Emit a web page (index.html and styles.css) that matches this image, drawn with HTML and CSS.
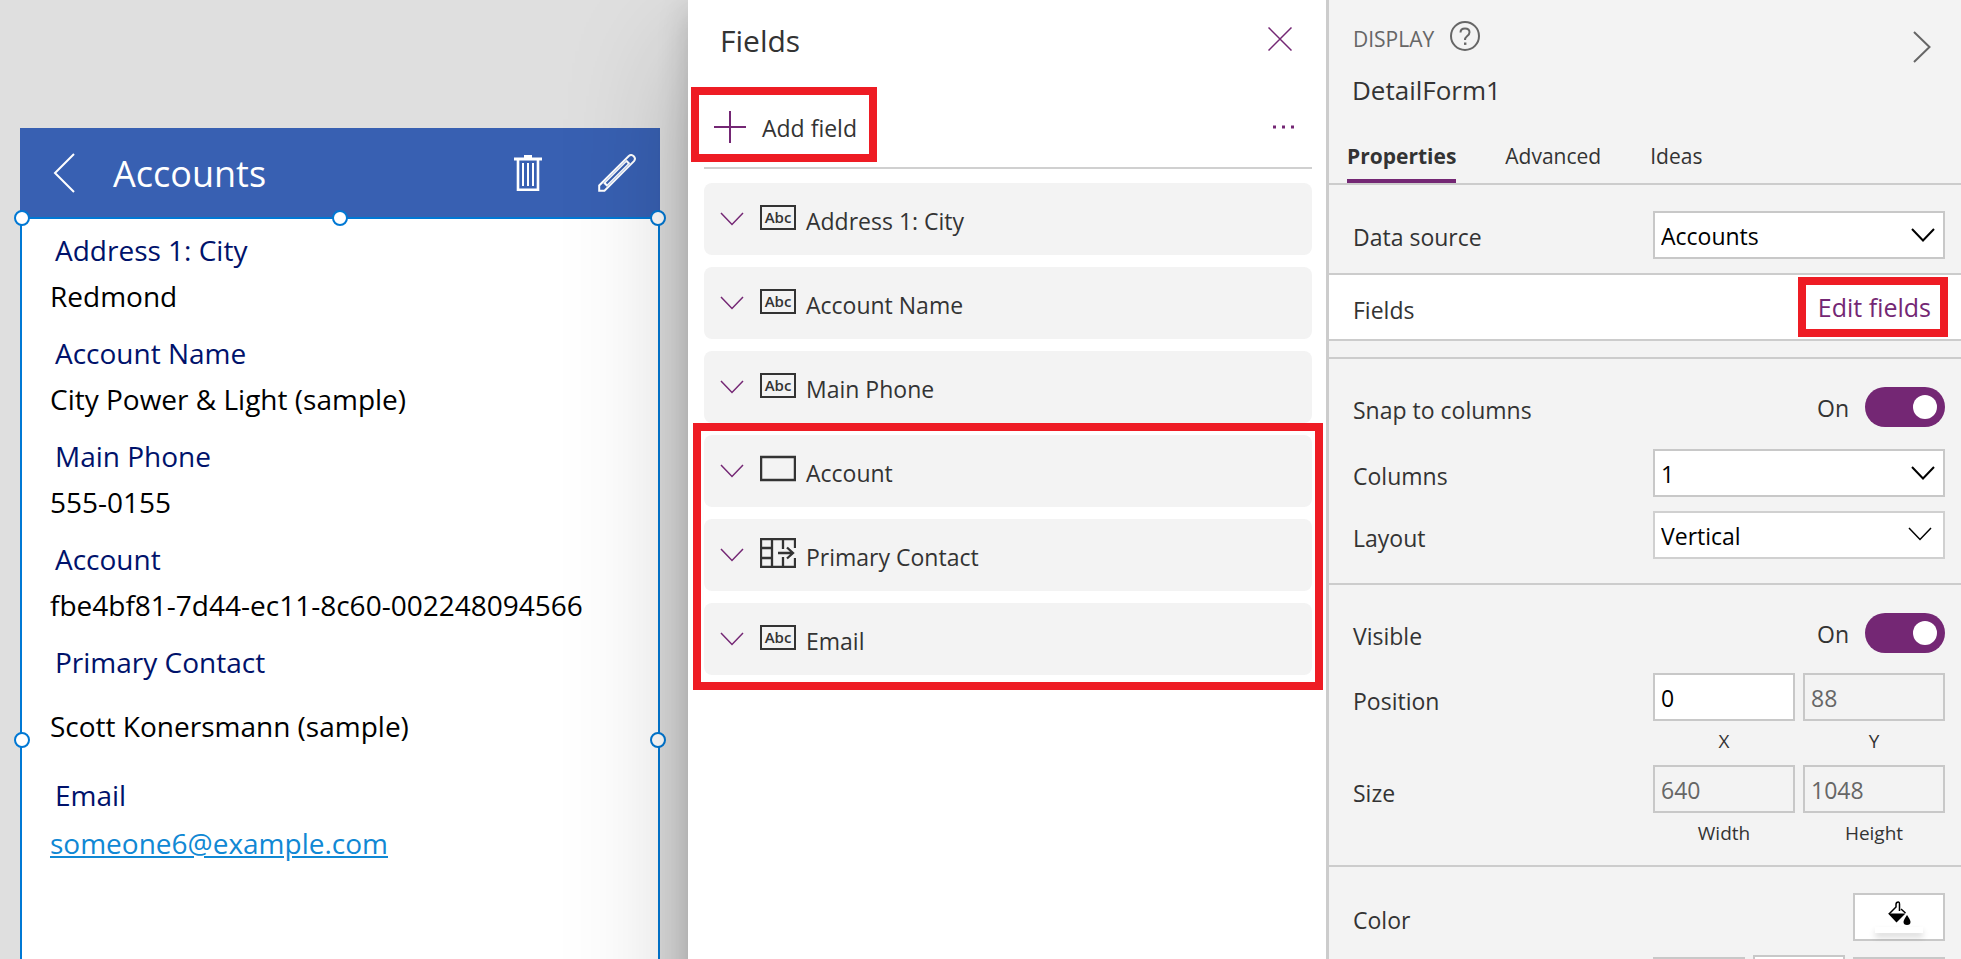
FILE: index.html
```html
<!DOCTYPE html>
<html lang="en">
<head>
<meta charset="utf-8">
<title>DetailForm1 - Fields</title>
<link rel="stylesheet" href="styles.css">
</head>
<body>
<svg class="defs" aria-hidden="true">
  <symbol id="chevron" viewBox="0 0 24 14"><path d="M1 1 L12 12.500 L23 1" fill="none" stroke="currentColor"/></symbol>
  <symbol id="blank" viewBox="0 0 36 30"><rect x="1" y="3" width="34" height="23" fill="none" stroke="currentColor" stroke-width="2.500"/></symbol>
  <symbol id="lookup" viewBox="0 0 36 30"><path d="M35 10 V1 H1 V29 H35 V20 M12 1 V29 M1 10 H12 M1 20 H12 M23 1 V11 M23 19 V29 M18 15 H33 M27 9.500 L33 15 L27 20.500" fill="none" stroke="currentColor" stroke-width="2.300"/></symbol>
</svg>
<div class="app">
  <main class="canvas">
    <div class="phone">
      <header class="phone-header">
        <button class="icon-btn" aria-label="Back"><svg width="24" height="40" viewBox="0 0 24 40"><path d="M22 1 L3 20 L22 39" fill="none" stroke="#fff" stroke-width="2"/></svg></button>
        <h1 class="phone-title">Accounts</h1>
        <button class="icon-btn trash" aria-label="Delete"><svg width="28" height="36" viewBox="0 0 28 36"><path d="M0 4 H28 M10 1.500 H18" stroke="#fff" stroke-width="3"/><path d="M4 4 V34.700 H24 V4" fill="none" stroke="#fff" stroke-width="2.600"/><path d="M9 8 V31 M14 8 V31 M19 8 V31" stroke="#fff" stroke-width="2"/></svg></button>
        <button class="icon-btn" aria-label="Edit"><svg width="38" height="38" viewBox="0 0 38 38"><path d="M1.200 36.800 V31.500 L30.800 2 A3.700 3.700 0 0 1 36 7.200 L6.500 36.800 Z" fill="none" stroke="#fff" stroke-width="2"/><path d="M7 31 L30.500 7.500" stroke="#fff" stroke-width="5"/><path d="M8.500 29.500 L29 9" stroke="#3860b2" stroke-width="2"/></svg></button>
      </header>
      <section class="form">
        <div class="card"><div class="card-label">Address 1: City</div><div class="card-value">Redmond</div></div>
        <div class="card"><div class="card-label">Account Name</div><div class="card-value">City Power &amp; Light (sample)</div></div>
        <div class="card"><div class="card-label">Main Phone</div><div class="card-value">555-0155</div></div>
        <div class="card"><div class="card-label">Account</div><div class="card-value">fbe4bf81-7d44-ec11-8c60-002248094566</div></div>
        <div class="card card-tall"><div class="card-label">Primary Contact</div><div class="card-value">Scott Konersmann (sample)</div></div>
        <div class="card card-link"><div class="card-label">Email</div><div class="card-value"><a href="#">someone6@example.com</a></div></div>
        <span class="handle top left"></span><span class="handle top center"></span><span class="handle top right"></span>
        <span class="handle middle left"></span><span class="handle middle right"></span>
      </section>
    </div>
  </main>

  <section class="fields">
    <header class="fields-header">
      <h2 class="fields-title">Fields</h2>
      <button class="icon-btn purple" aria-label="Close"><svg width="24" height="24" viewBox="0 0 24 24"><path d="M0.500 0.500 L23.500 23.500 M23.500 0.500 L0.500 23.500" stroke="currentColor" stroke-width="1.500"/></svg></button>
    </header>
    <div class="fields-toolbar">
      <button class="add-field"><svg width="32" height="32" viewBox="0 0 32 32"><path d="M0 16 H32 M16 0 V32" stroke="#742774" stroke-width="2"/></svg><span class="add-text">Add field</span></button>
      <button class="icon-btn purple" aria-label="More"><svg width="24" height="4" viewBox="0 0 24 4"><path d="M1 2 h3 M10 2 h3 M19 2 h3" stroke="currentColor" stroke-width="3"/></svg></button>
      <span class="callout callout-add"></span>
    </div>
    <div class="field-list">
      <div class="field"><button class="icon-btn purple" aria-label="Expand"><svg class="chev" width="24" height="14"><use href="#chevron"/></svg></button><span class="type type-abc">Abc</span><span class="field-name">Address 1: City</span></div>
      <div class="field"><button class="icon-btn purple" aria-label="Expand"><svg class="chev" width="24" height="14"><use href="#chevron"/></svg></button><span class="type type-abc">Abc</span><span class="field-name">Account Name</span></div>
      <div class="field"><button class="icon-btn purple" aria-label="Expand"><svg class="chev" width="24" height="14"><use href="#chevron"/></svg></button><span class="type type-abc">Abc</span><span class="field-name">Main Phone</span></div>
      <div class="field-group">
        <div class="field"><button class="icon-btn purple" aria-label="Expand"><svg class="chev" width="24" height="14"><use href="#chevron"/></svg></button><svg class="type" width="36" height="30"><use href="#blank"/></svg><span class="field-name">Account</span></div>
        <div class="field"><button class="icon-btn purple" aria-label="Expand"><svg class="chev" width="24" height="14"><use href="#chevron"/></svg></button><svg class="type" width="36" height="30"><use href="#lookup"/></svg><span class="field-name">Primary Contact</span></div>
        <div class="field"><button class="icon-btn purple" aria-label="Expand"><svg class="chev" width="24" height="14"><use href="#chevron"/></svg></button><span class="type type-abc">Abc</span><span class="field-name">Email</span></div>
        <span class="callout callout-group"></span>
      </div>
    </div>
  </section>

  <aside class="props">
    <header class="props-header">
      <div class="props-name">
        <div class="props-kind"><span>DISPLAY</span>
          <button class="icon-btn help" aria-label="Help"><svg width="30" height="30" viewBox="0 0 30 30"><circle cx="15" cy="15" r="14" fill="none" stroke="#666" stroke-width="2"/><path d="M10.500 11.500 Q10.500 7.500 15 7.500 Q19.500 7.500 19.500 11.300 Q19.500 13.500 17 15.300 Q15 16.800 15 19" fill="none" stroke="#666" stroke-width="2"/><rect x="14" y="21.500" width="2.400" height="2.400" fill="#666"/></svg></button>
        </div>
        <h2 class="props-title">DetailForm1</h2>
      </div>
      <button class="icon-btn collapse" aria-label="Collapse"><svg width="18" height="32" viewBox="0 0 18 32"><path d="M1 1 L16.500 16 L1 31" fill="none" stroke="#666" stroke-width="2"/></svg></button>
    </header>
    <nav class="tabs">
      <button class="tab active">Properties</button>
      <button class="tab">Advanced</button>
      <button class="tab">Ideas</button>
    </nav>

    <div class="section source">
      <label class="label" for="source">Data source</label>
      <div class="pick"><select id="source"><option>Accounts</option></select><svg class="chev-dark" width="24" height="14"><use href="#chevron"/></svg></div>
    </div>
    <div class="fields-row">
      <span class="label">Fields</span>
      <a href="#" class="edit">Edit fields</a>
      <span class="callout callout-edit"></span>
    </div>
    <div class="gap"></div>

    <div class="section">
      <div class="row toggle-row"><label class="label" for="snap">Snap to columns</label><span class="on">On</span><input class="toggle" type="checkbox" id="snap" checked></div>
      <div class="row row-columns"><label class="label" for="columns">Columns</label>
        <div class="pick"><select id="columns"><option>1</option></select><svg class="chev-dark" width="24" height="14"><use href="#chevron"/></svg></div></div>
      <div class="row row-layout"><label class="label" for="layout">Layout</label>
        <div class="pick pick-light"><select id="layout"><option>Vertical</option></select><svg class="chev" width="24" height="14"><use href="#chevron"/></svg></div></div>
    </div>

    <div class="section">
      <div class="row toggle-row"><label class="label" for="visible">Visible</label><span class="on">On</span><input class="toggle" type="checkbox" id="visible" checked></div>
      <div class="row pair-row row-position"><span class="label">Position</span>
        <div class="pair">
          <div class="cell"><input class="num" id="x" type="text" value="0"><label for="x">X</label></div>
          <div class="cell"><input class="num" id="y" type="text" value="88" disabled><label for="y">Y</label></div>
        </div></div>
      <div class="row pair-row row-size"><span class="label">Size</span>
        <div class="pair">
          <div class="cell"><input class="num" id="w" type="text" value="640" disabled><label for="w">Width</label></div>
          <div class="cell"><input class="num" id="h" type="text" value="1048" disabled><label for="h">Height</label></div>
        </div></div>
    </div>

    <div class="section last">
      <div class="row color-row"><span class="label">Color</span>
        <button class="swatch" aria-label="Color"><svg width="24" height="24" viewBox="0 0 24 24"><path d="M2 13 L9 6 V3.500 Q9 1 11.500 1 Q12.500 1 12.500 3 V10" fill="none" stroke="#000" stroke-width="1.500"/><path d="M14 8 L18.500 12" stroke="#000" stroke-width="1.500"/><path d="M1 12.500 H18.500 L9.500 21.500 Z"/><path d="M20 14 Q23.500 19 23.500 21 A3.500 3 0 0 1 16.500 21 Q16.500 19 20 14 Z"/></svg><span class="swatch-bar"></span></button></div>
      <div class="border-row"><button class="box" aria-label="Border style"></button><input class="box box-white" aria-label="Border width" type="text"><button class="box" aria-label="Border color"></button></div>
    </div>
  </aside>
</div>
</body>
</html>
```

FILE: styles.css
```css
* { box-sizing: border-box; }
body { margin: 0; font-family: "Open Sans", "Noto Sans", sans-serif; font-size: 23px; line-height: 32px; color: #333; }
h1, h2 { margin: 0; font-weight: 400; }
button, input, select { font: inherit; color: inherit; margin: 0; }
.defs { position: absolute; width: 0; height: 0; }
.app { display: grid; grid-template-columns: minmax(0, 1fr) 638px 635px; height: 100vh; overflow: hidden; }
.icon-btn { display: flex; padding: 0; border: 0; background: none; color: #666; }
.icon-btn svg { display: block; }
.purple { color: #742774; }
.chev { stroke-width: 1.5px; }
.chev-dark { stroke-width: 2px; }
.callout { position: absolute; border: 8px solid #ee1c24; pointer-events: none; }

/* canvas */
.canvas { display: flex; flex-direction: column; padding: 128px 28px 0 20px; background: #dfdfdf; min-width: 0; }
.phone { flex: 1 0 auto; display: flex; flex-direction: column; background: #fff; }
.phone-header { display: flex; align-items: center; height: 89px; padding: 0 24px 0 32px; background: #3860b2; color: #fff; }
.phone-title { flex: 1; margin-left: 37px; font-size: 36px; line-height: 48px; padding-top: 2px; }
.trash { margin-right: 56px; }
.form { position: relative; flex: 1 0 auto; border: 2px solid #0078d4; border-bottom: 0; padding: 12px 28px 0; font-size: 28px; line-height: 38px; min-height: 1040px; }
.card { display: flex; flex-direction: column; gap: 8px; margin-bottom: 19px; color: #000; }
.card-label { padding-left: 5px; color: #00126b; }
.card-tall { gap: 26px; margin-bottom: 31px; }
.card-link { gap: 10px; }
.card a { color: #1088d4; }
.handle { position: absolute; width: 16px; height: 16px; border: 2px solid #0078d4; border-radius: 50%; background: #fff; }
.handle.top { top: -9px; }
.handle.middle { top: 513px; }
.handle.left { left: -8px; }
.handle.center { left: calc(50% - 8px); }
.handle.right { right: -8px; }

/* fields */
.fields { position: relative; z-index: 1; padding: 0 14px 0 16px; background: #fff; box-shadow: 0 51px 115px rgba(0,0,0,.22), 0 10px 29px rgba(0,0,0,.18); }
.fields-header { display: flex; justify-content: space-between; align-items: center; height: 78px; padding: 0 20px 0 16px; }
.fields-title { font-size: 30px; line-height: 40px; padding-top: 4px; }
.fields-toolbar { position: relative; display: flex; justify-content: space-between; align-items: center; height: 91px; padding: 9px 16px 0 10px; border-bottom: 2px solid #d0d0d0; }
.add-field { display: flex; align-items: center; gap: 16px; padding: 0; border: 0; background: none; }
.add-text { padding-top: 2px; }
.callout-add { left: -13px; top: 9px; width: 186px; height: 75px; }
.field-list, .field-group { display: flex; flex-direction: column; gap: 12px; }
.field-list { padding-top: 14px; }
.field { display: flex; align-items: center; height: 72px; padding: 0 16px; background: #f3f3f3; border-radius: 8px; }
.field-name { padding-top: 4px; }
.type { margin: 0 10px 4px 16px; }
.type-abc { width: 36px; height: 25px; border: 2px solid #333; font-size: 15px; font-weight: 600; line-height: 20px; text-align: center; }
.field-group { position: relative; }
.callout-group { inset: -12px -11px -15px; }

/* properties */
.props { position: relative; z-index: 2; border-left: 3px solid #ccc; background: #f3f3f3; min-width: 0; }
.props-header { display: flex; justify-content: space-between; height: 120px; padding: 20px 30px 0 23px; }
.props-kind { display: flex; align-items: center; gap: 16px; padding-left: 1px; color: #666; font-size: 21px; }
.props-kind span { padding-top: 3px; }
.help { margin-bottom: 4px; }
.props-title { font-size: 26px; line-height: 36px; margin-top: 17px; }
.collapse { align-self: flex-start; margin-top: 11px; }
.tabs { display: flex; gap: 49px; height: 65px; padding-left: 18px; border-bottom: 2px solid #ccc; }
.tab { padding: 20px 0 7px; height: 63px; line-height: 32px; border: 0; border-bottom: 4px solid transparent; background: none; font-size: 21px; }
.tab.active { font-weight: 700; border-color: #742774; }
.label { flex: 1; padding-top: 5px; }
.section { padding: 28px 16px 24px 24px; border-bottom: 2px solid #ccc; }
.row, .source { display: flex; align-items: center; }
.source { padding: 26px 16px 14px 24px; }
.source .label { padding-top: 3px; }
.pick { display: grid; align-items: center; width: 292px; color: #000; }
.pick select { grid-area: 1 / 1; width: 100%; height: 48px; padding: 2px 6px 0; border: 2px solid #c8c8c8; border-radius: 0; background: #fff; appearance: none; }
.pick svg { grid-area: 1 / 1; justify-self: end; margin-right: 10px; pointer-events: none; }
.pick-light select { border-color: #d0d0d0; }
.pick-light svg { margin: 0 13px 2px 0; }
.fields-row { position: relative; display: flex; align-items: center; height: 66px; padding: 0 30px 0 24px; background: #fff; border-bottom: 2px solid #ccc; }
.edit { color: #742774; text-decoration: none; font-size: 25px; }
.callout-edit { right: 13px; top: 2px; width: 150px; height: 60px; }
.gap { height: 18px; border-bottom: 2px solid #ccc; }
.toggle-row { height: 40px; }
.toggle-row .label { padding-top: 6px; }
.on { margin-right: 16px; padding-top: 2px; }
.toggle { appearance: none; width: 80px; height: 40px; border-radius: 20px; background: #742774; display: flex; justify-content: flex-end; align-items: center; padding: 0 8px; }
.toggle::before { content: ""; width: 24px; height: 24px; border-radius: 50%; background: #fff; }
.row-columns { margin-top: 22px; }
.row-layout { margin-top: 14px; }
.row-position { margin-top: 20px; }
.row-size { margin-top: 12px; }
.pair-row { align-items: flex-start; }
.pair-row .label { padding-top: 12px; }
.pair { display: grid; grid-template-columns: 1fr 1fr; gap: 8px; width: 292px; }
.cell { display: flex; flex-direction: column; font-size: 19px; line-height: 32px; text-align: center; }
.num { width: 100%; height: 48px; padding: 2px 6px 0; border: 2px solid #c8c8c8; border-radius: 0; background: #fff; color: #000; font-size: 23px; }
.num:disabled { background: #f3f3f3; color: #666; }
.cell label { padding-top: 4px; height: 32px; }
.row-size .cell { margin-bottom: -4px; }
.last { padding-top: 26px; border: 0; }
.swatch { display: flex; flex-direction: column; align-items: center; width: 92px; height: 48px; padding: 6px 0 0; border: 2px solid #c8c8c8; background: #fff; }
.swatch-bar { width: 48px; height: 6px; margin-top: 2px; background: #fff; box-shadow: 0 4px 6px rgba(0,0,0,.16); }
.border-row { display: grid; grid-template-columns: 92px 92px 92px; gap: 8px; justify-content: end; align-items: start; margin-top: 14px; }
.box { height: 48px; margin-top: 2px; border: 2px solid #c8c8c8; background: #f3f3f3; width: 100%; border-radius: 0; }
.box-white { background: #fff; margin-top: 0; }
```
